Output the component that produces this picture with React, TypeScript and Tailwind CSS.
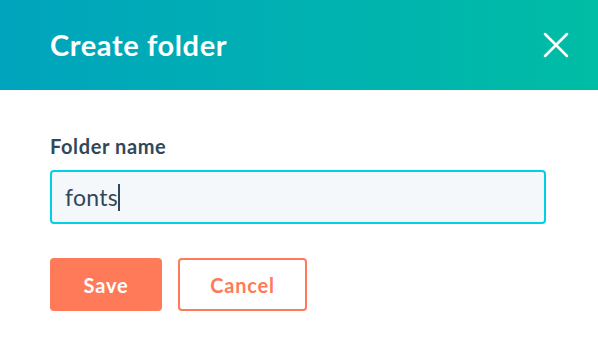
import { X } from "lucide-react";

export default function App() {
  return (
    <div className="w-[598px] h-[342px] bg-white font-['Lato','Noto_Sans',sans-serif] overflow-hidden">
      <div className="h-[90px] flex items-center justify-between pl-[50px] pr-[20px] bg-gradient-to-r from-[#00a4bd] to-[#00bda5]">
        <h1 className="text-[29px] font-bold text-white tracking-[0.6px]">Create folder</h1>
        <button type="button" className="text-white">
          <X size={44} strokeWidth={1.4} />
        </button>
      </div>

      <div className="px-[50px] pt-[46px]">
        <label htmlFor="folder" className="block text-[20px] font-bold text-[#33475b] leading-none tracking-[0.6px]">
          Folder name
        </label>
        <div className="relative mt-[14px]">
          <input
            id="folder"
            defaultValue="fonts"
            className="w-[496px] h-[54px] rounded-[4px] border-2 border-[#00d0e4] bg-[#f5f8fa] px-[13px] text-[23px] text-[#33475b] outline-none tracking-[0.3px]"
          />
          {/* caret */}
          <span className="absolute left-[68px] top-[14px] w-[1.5px] h-[27px] bg-[#33475b]" />
        </div>

        <div className="mt-[34px] flex gap-4">
          <button
            type="button"
            className="w-[112px] h-[53px] rounded-[4px] bg-[#ff7a59] text-white text-[20px] font-bold tracking-[0.8px]"
          >
            Save
          </button>
          <button
            type="button"
            className="w-[129px] h-[53px] rounded-[4px] border-2 border-[#ff7a59] bg-white text-[#ff7a59] text-[20px] font-bold tracking-[0.8px]"
          >
            Cancel
          </button>
        </div>
      </div>
    </div>
  );
}
